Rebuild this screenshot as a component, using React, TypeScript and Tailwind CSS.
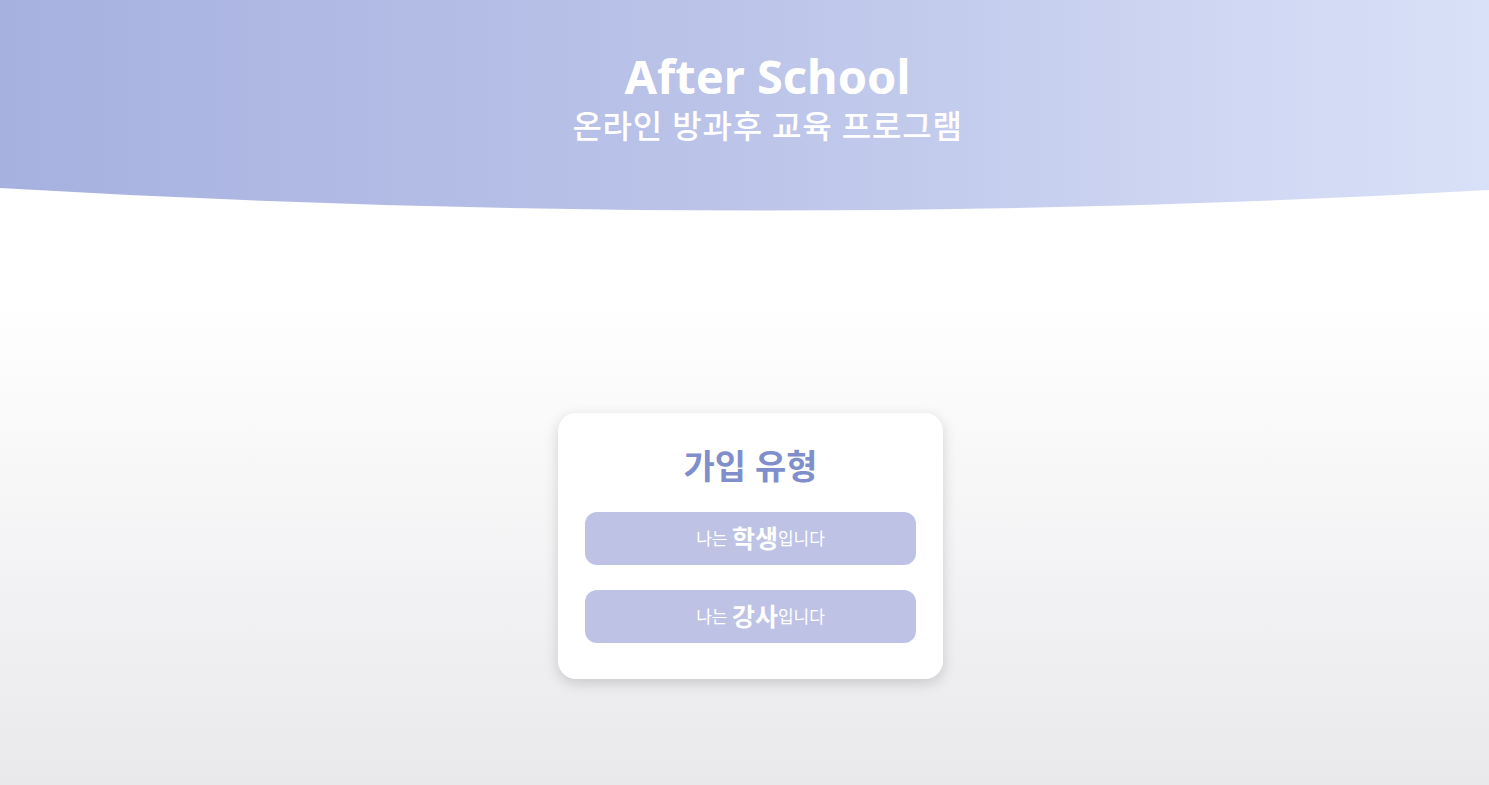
import React from 'react';

const FONT = { fontFamily: '"Noto Sans", "Noto Sans CJK KR", sans-serif' };

function HeaderWave() {
  return (
    <svg
      className="absolute inset-0 h-full w-full"
      viewBox="0 0 1489 212"
      preserveAspectRatio="none"
    >
      <defs>
        <linearGradient id="hdr" x1="0" y1="0" x2="1" y2="0">
          <stop offset="0" stopColor="#a6b1df" />
          <stop offset="0.5" stopColor="#bcc4e9" />
          <stop offset="1" stopColor="#d9e1f8" />
        </linearGradient>
      </defs>
      <path d="M0 0 H1489 V190 Q745 232 0 188 Z" fill="url(#hdr)" />
    </svg>
  );
}

function TypeButton({ role }: { role: string }) {
  return (
    <button className="flex h-[53px] w-full items-center justify-center rounded-[12px] bg-[#bec3e6] pl-[20px] text-white">
      <span className="text-[17px] leading-none">나는&nbsp;</span>
      <span className="text-[25px] font-bold leading-none">{role}</span>
      <span className="text-[17px] leading-none">입니다</span>
    </button>
  );
}

export default function App() {
  return (
    <div
      className="flex min-h-screen flex-col items-center bg-gradient-to-b from-white from-[38%] to-[#e9e9ec]"
      style={FONT}
    >
      <header className="relative flex h-[212px] w-full flex-col items-center pl-[46px] pt-[46px] text-white">
        <HeaderWave />
        <h1 className="relative text-[47px] font-bold leading-[60px]">After School</h1>
        <p className="relative mt-[-1px] text-[32px] font-medium leading-[42px] tracking-[0.8px]">
          온라인 방과후 교육 프로그램
        </p>
      </header>

      <div className="ml-[12px] mt-[201px] flex w-[385px] flex-col items-center rounded-[18px] bg-white px-[27px] pb-[36px] pt-[30px] shadow-[0_4px_14px_rgba(0,0,0,0.16)]">
        <h2 className="text-[34px] font-semibold leading-[46px] text-[#7f8fcc]">가입 유형</h2>
        <div className="mt-[23px] flex w-full flex-col gap-[25px]">
          <TypeButton role="학생" />
          <TypeButton role="강사" />
        </div>
      </div>
    </div>
  );
}
